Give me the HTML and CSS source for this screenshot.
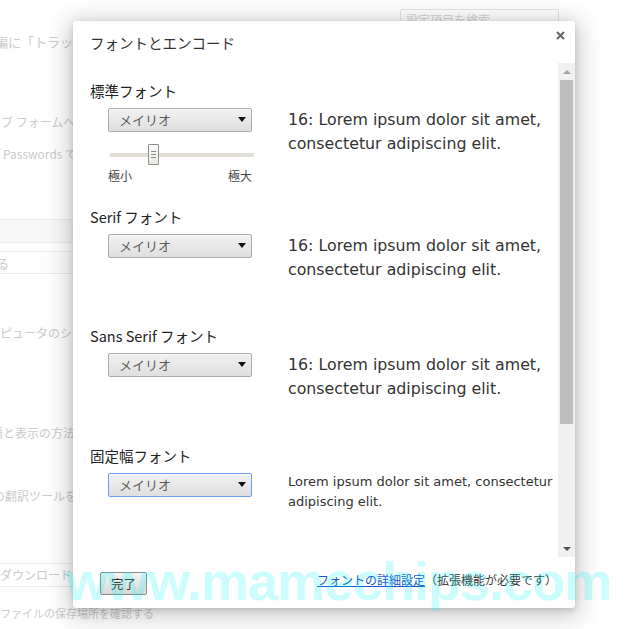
FILE: index.html
```html
<!DOCTYPE html>
<html lang="ja">
<head>
<meta charset="utf-8">
<title>フォントとエンコード</title>
<link rel="stylesheet" href="styles.css">
</head>
<body>
<div class="screen">
  <div class="page">
    <div class="page-top">
      <div class="search">設定項目を検索</div>
    </div>
    <div class="bg-line r1"><span class="bg-text shift-a">編に「トラッキング拒否」リクエストを送信する</span></div>
    <div class="bg-line r2"><span class="bg-text shift-b">ウェブ フォームへの自動入力を有効にする</span></div>
    <div class="bg-line r3"><span class="bg-text shift-c">Passwords でパスワードを保存できるようにする</span></div>
    <div class="bg-band band1"></div>
    <div class="bg-band band2"><span class="bg-text shift-d">る</span></div>
    <div class="bg-line r4"><span class="bg-text shift-e">コンピュータのシステム設定を開く</span></div>
    <div class="bg-line r5"><span class="bg-text shift-f">語と表示の方法</span></div>
    <div class="bg-line r6"><span class="bg-text shift-g">の翻訳ツールを使用する</span></div>
    <div class="bg-band band3"><span class="bg-text shift-h">ダウンロード</span></div>
    <div class="bg-line r8"><span class="bg-text shift-i">ファイルの保存場所を確認する</span></div>
  </div>

  <div class="dialog">
    <div class="dlg-head">
      <div class="dlg-title">フォントとエンコード</div>
      <svg class="dlg-close" width="9" height="9" viewBox="0 0 9 9"><path d="M1 1 L8 8 M8 1 L1 8" stroke="#666" stroke-width="2" fill="none"/></svg>
    </div>
    <div class="dlg-body">
      <div class="content">
        <div class="section sec-std">
          <div class="sec-label">標準フォント</div>
          <div class="sec-row">
            <div class="ctrl">
              <div class="select"><span class="select-text">メイリオ</span><i class="caret"></i></div>
              <div class="slider">
                <div class="track"></div>
                <div class="thumb">
                  <svg width="5" height="7" viewBox="0 0 5 7"><path d="M0 0.5 H5 M0 3.5 H5 M0 6.5 H5" stroke="#8a8a8a" stroke-width="1"/></svg>
                </div>
              </div>
              <div class="scale"><span>極小</span><span>極大</span></div>
            </div>
            <div class="preview">16: Lorem ipsum dolor sit amet, consectetur adipiscing elit.</div>
          </div>
        </div>

        <div class="section sec-mid">
          <div class="sec-label">Serif フォント</div>
          <div class="sec-row">
            <div class="ctrl">
              <div class="select"><span class="select-text">メイリオ</span><i class="caret"></i></div>
            </div>
            <div class="preview">16: Lorem ipsum dolor sit amet, consectetur adipiscing elit.</div>
          </div>
        </div>

        <div class="section sec-mid2">
          <div class="sec-label">Sans Serif フォント</div>
          <div class="sec-row">
            <div class="ctrl">
              <div class="select"><span class="select-text">メイリオ</span><i class="caret"></i></div>
            </div>
            <div class="preview">16: Lorem ipsum dolor sit amet, consectetur adipiscing elit.</div>
          </div>
        </div>

        <div class="section">
          <div class="sec-label">固定幅フォント</div>
          <div class="sec-row">
            <div class="ctrl">
              <div class="select select-focus"><span class="select-text">メイリオ</span><i class="caret"></i></div>
            </div>
            <div class="preview preview-small">Lorem ipsum dolor sit amet, consectetur adipiscing elit.</div>
          </div>
        </div>
      </div>
      <div class="scrollbar">
        <div class="sb-btn"><i class="arrow-up"></i></div>
        <div class="sb-thumb"></div>
        <div class="sb-track"></div>
        <div class="sb-btn"><i class="arrow-down"></i></div>
      </div>
    </div>
    <div class="dlg-foot">
      <button class="btn-done" type="button">完了</button>
      <div class="foot-note"><a class="foot-link" href="#">フォントの詳細設定</a>（拡張機能が必要です）</div>
    </div>
  </div>

  <div class="watermark">www.mamechips.com</div>
</div>
</body>
</html>
```

FILE: styles.css
```css
* { box-sizing: border-box; }
html, body { margin: 0; padding: 0; background: #fff; }
body { font-family: "Noto Sans CJK JP", "DejaVu Sans", sans-serif; }

.screen {
  position: relative;
  width: 640px;
  height: 629px;
  overflow: hidden;
  background: #fff;
}

/* background settings page (dimmed) */
.page {
  display: flex;
  flex-direction: column;
  width: 640px;
  height: 629px;
  color: #cbcbcb;
  font-size: 12px;
  line-height: 16px;
  white-space: nowrap;
  overflow: hidden;
}
.page-top {
  display: flex;
  justify-content: flex-end;
  padding: 9px 81px 0 0;
}
.search {
  width: 159px;
  height: 22px;
  border: 1px solid #e4e4e4;
  border-radius: 2px;
  padding: 2px 0 0 5px;
  color: #d4d4d4;
}
.bg-line { height: 16px; }
.bg-text { display: inline-block; }
.r1 { margin-top: 3px; font-size: 13px; }
.r2 { margin-top: 64px; }
.r3 { margin-top: 16px; }
.r4 { margin-top: 51px; }
.r5 { margin-top: 84px; }
.r6 { margin-top: 47px; }
.r8 { margin-top: 18px; font-size: 11px; }
.bg-band {
  width: 420px;
  border-top: 1px solid #ececec;
  border-bottom: 1px solid #ececec;
  display: flex;
  align-items: center;
}
.band1 { margin-top: 57px; height: 24px; background: #f8f8f8; }
.band2 { margin-top: 8px; height: 23px; background: #fdfdfd; padding-top: 3px; }
.band3 { margin-top: 59px; height: 24px; background: #fff; }
.shift-a { margin-left: -5px; }
.shift-b { margin-left: -23px; }
.shift-c { margin-left: 3px; }
.shift-d { margin-left: -3px; }
.shift-e { margin-left: -24px; }
.shift-f { margin-left: -9px; }
.shift-g { margin-left: -7px; }
.shift-h { margin-left: 0; }
.shift-i { margin-left: 0; }

/* dialog */
.dialog {
  position: absolute;
  left: 73px;
  top: 21px;
  width: 502px;
  height: 587px;
  background: #fff;
  border-radius: 3px;
  box-shadow: 0 4px 23px 5px rgba(0,0,0,0.2), 0 2px 6px rgba(0,0,0,0.15);
  display: flex;
  flex-direction: column;
  color: #333;
}
.dlg-head {
  height: 42px;
  flex: none;
  display: flex;
  justify-content: space-between;
  align-items: flex-start;
  padding: 10px 10px 0 17px;
}
.dlg-title {
  margin-top: 2px;
  font-size: 14.5px;
  line-height: 20px;
  color: #333;
}
.dlg-close { display: block; }

.dlg-body {
  height: 494px;
  flex: none;
  display: flex;
}
.content {
  flex: 1;
  padding: 18px 0 0 17px;
  overflow: hidden;
}
.scrollbar {
  width: 17px;
  flex: none;
  background: #f0f0f0;
  display: flex;
  flex-direction: column;
}
.sb-btn {
  height: 17px;
  flex: none;
  display: flex;
  align-items: center;
  justify-content: center;
}
.arrow-up {
  width: 0; height: 0;
  border-left: 4px solid transparent;
  border-right: 4px solid transparent;
  border-bottom: 4px solid #a3a3a3;
}
.arrow-down {
  width: 0; height: 0;
  border-left: 4px solid transparent;
  border-right: 4px solid transparent;
  border-top: 4px solid #505050;
}
.sb-thumb {
  height: 344px;
  flex: none;
  margin: 0 2px;
  background: #bebebe;
}
.sb-track { flex: 1; }

/* sections */
.sec-std { margin-bottom: 24px; }
.sec-mid { margin-bottom: 44px; }
.sec-mid2 { margin-bottom: 45px; }
.sec-label {
  font-size: 14.5px;
  line-height: 20px;
  color: #222;
  margin-bottom: 7px;
}
.sec-row { display: flex; align-items: flex-start; }
.ctrl {
  width: 144px;
  margin-left: 18px;
  flex: none;
}
.select {
  height: 24px;
  border: 1px solid #acacac;
  border-radius: 2px;
  background: linear-gradient(#f1f1f1, #dfdfdf);
  box-shadow: inset 0 1px 0 rgba(255,255,255,0.6);
  display: flex;
  align-items: center;
  justify-content: space-between;
  padding: 0 5px 0 10px;
}
.select-focus { border-color: #6d9eeb; }
.select-text {
  font-size: 13px;
  line-height: 16px;
  color: #5a5a5a;
}
.caret {
  width: 0; height: 0;
  border-left: 4px solid transparent;
  border-right: 4px solid transparent;
  border-top: 5px solid #111;
  margin-top: -1px;
}
.slider {
  position: relative;
  width: 144px;
  height: 21px;
  margin: 12px 0 0 2px;
  display: flex;
  align-items: center;
}
.track {
  width: 100%;
  height: 4px;
  background: #e1ded7;
}
.thumb {
  position: absolute;
  left: 38px;
  top: 0;
  width: 11px;
  height: 21px;
  border: 1px solid #8e8e8e;
  border-radius: 1px;
  background: linear-gradient(#fbfbfa, #ebe8e2);
  display: flex;
  align-items: center;
  justify-content: center;
}
.thumb svg { display: block; }
.scale {
  display: flex;
  justify-content: space-between;
  margin-top: 4px;
  font-size: 12px;
  line-height: 14px;
  color: #444;
}
.preview {
  margin-left: 36px;
  width: 268px;
  font-family: "DejaVu Sans", "Noto Sans CJK JP", sans-serif;
  font-size: 15.8px;
  line-height: 24px;
  color: #333;
}
.preview-small {
  font-size: 13px;
  line-height: 20px;
  margin-top: -1px;
}

/* footer */
.dlg-foot {
  flex: 1;
  display: flex;
  align-items: flex-start;
  padding: 15px 18px 0 27px;
}
.btn-done {
  width: 47px;
  height: 23px;
  padding: 0;
  border: 1px solid #8a8a8a;
  border-radius: 2px;
  background: linear-gradient(#f3f3f3, #dadada);
  font-family: "Noto Sans CJK JP", sans-serif;
  font-size: 12.5px;
  line-height: 16px;
  color: #333;
}
.foot-note {
  margin-left: auto;
  font-size: 12px;
  line-height: 16px;
  color: #333;
  white-space: nowrap;
}
.foot-link {
  color: #1a55cc;
  text-decoration: underline;
}

/* watermark overlay */
.watermark {
  position: absolute;
  left: 66px;
  top: 554px;
  font-family: "Liberation Sans", Arial, sans-serif;
  font-weight: bold;
  font-size: 54px;
  line-height: 54px;
  letter-spacing: -1px;
  color: rgba(0, 245, 245, 0.2);
  white-space: nowrap;
  pointer-events: none;
}
```
